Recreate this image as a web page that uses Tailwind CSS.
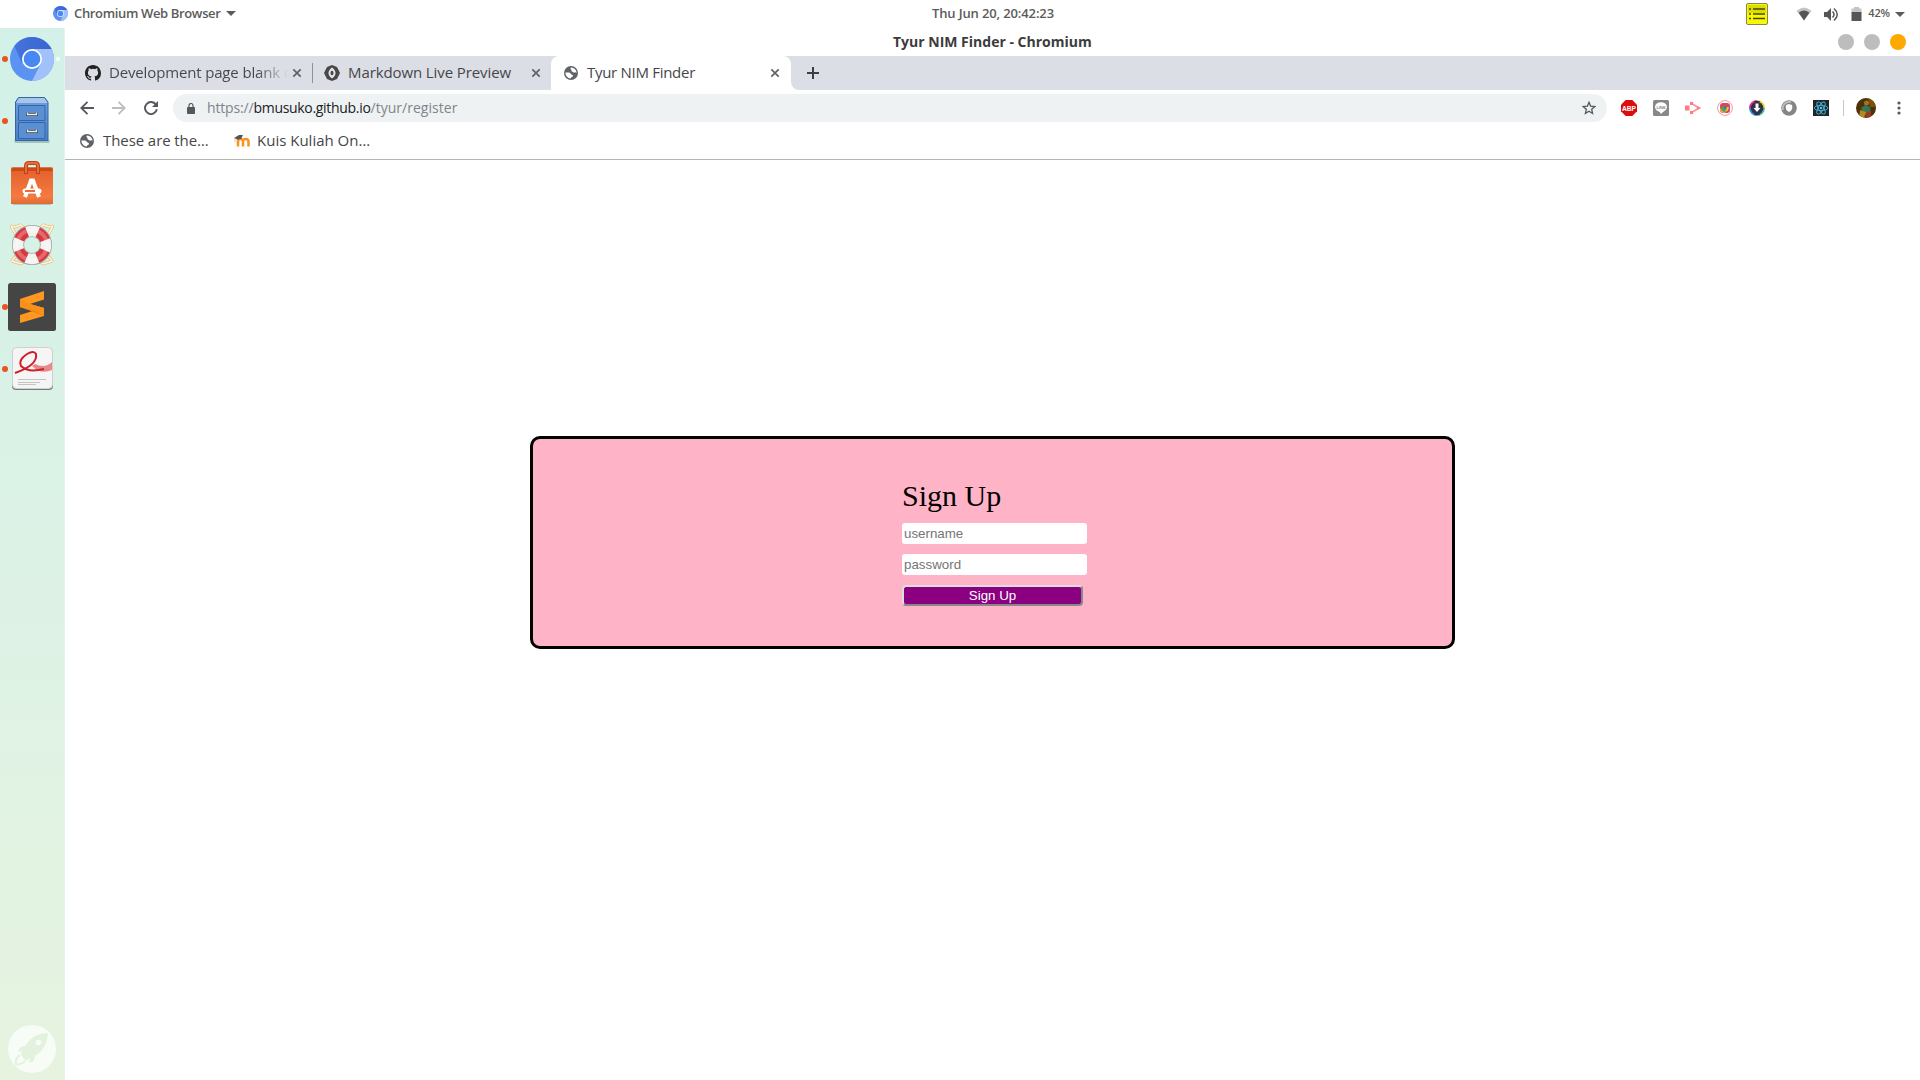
<!DOCTYPE html>
<html lang="en">
<head>
<meta charset="utf-8">
<title>Tyur NIM Finder - Chromium</title>
<script src="https://cdn.jsdelivr.net/npm/@tailwindcss/browser@4"></script>
</head>
<body class="flex h-screen w-screen flex-col overflow-hidden bg-white font-['Open_Sans',sans-serif] text-[#45464a]">
<svg class="absolute size-0">
  <defs>
    <linearGradient id="blade" x1="0" y1="0" x2="1" y2="0"><stop offset="0" stop-color="#4574dd"/><stop offset="1" stop-color="#3764cf"/></linearGradient>
    <linearGradient id="cab" x1="0" y1="0" x2="0" y2="1"><stop offset="0" stop-color="#6ea0e0"/><stop offset="1" stop-color="#4c80c6"/></linearGradient>
    <linearGradient id="bag" x1="0" y1="0" x2="0" y2="1"><stop offset="0" stop-color="#e2602a"/><stop offset=".8" stop-color="#f47a40"/><stop offset="1" stop-color="#e06a34"/></linearGradient>
    <symbol id="chromium" viewBox="0 0 44 44">
      <circle cx="22" cy="22" r="22" fill="#5b93f3"/>
      <path d="M22 12H41.6A22 22 0 0 1 22 44L31 26Z" fill="#a1c1fa"/>
      <path d="M4.3 9A22 22 0 0 1 41.6 12H22L12 26Z" fill="url(#blade)"/>
      <circle cx="22" cy="22" r="10" fill="#fff"/><circle cx="22" cy="22" r="8.3" fill="#4688f4"/>
    </symbol>
    <symbol id="globe" viewBox="0 0 14 14">
      <circle cx="7" cy="7" r="7" fill="#5f6368"/>
      <path d="M7.2 1.4c-1 .5-.8 1.600-.2 2 .9.5.2 1.600 1 2.100 1 .5 1.600 1.200 2.900.9 1-.2 1.300.6 1.700.3C12.400 3.700 10 1.500 7.200 1.400ZM1.400 6.500c0 3 2.300 5.700 5.400 6.100.1-1 .3-1.400 1.400-1.700 1-.3.9-1.800.1-2.100-1-.3-1.500-.3-1.700-1.200-.3-1-1.400-1.100-2.700-1.100Z" fill="#fff"/>
    </symbol>
    <symbol id="close" viewBox="0 0 10 10"><path d="M1.300 1.300L8.700 8.700M8.700 1.300L1.300 8.700" stroke="#5f6368" stroke-width="1.700"/></symbol>
  </defs>
</svg>

<!-- Desktop panel -->
<header class="grid h-7 shrink-0 grid-cols-3 items-center text-[13px] font-semibold leading-[18px] text-[#5b5b5b]">
  <div class="flex items-center pb-[2px] pl-[53px]">
    <svg class="size-[15px]"><use href="#chromium"/></svg>
    <span class="ml-[6px] tracking-[-0.35px] whitespace-nowrap">Chromium Web Browser</span>
    <svg class="ml-[5px] h-[5px] w-[10px]" viewBox="0 0 10 5"><path d="M0 0H10L5 5Z" fill="#5b5b5b"/></svg>
  </div>
  <div class="pb-[2px] pl-[65px]"><div class="w-[246px] pl-[227px] whitespace-nowrap tracking-[-0.13px]">Thu Jun 20, 20:42:23</div></div>
  <div class="flex items-center justify-end pr-[15px]">
    <svg class="mr-[28px] size-[22px]" viewBox="0 0 22 22"><rect x=".5" y=".5" width="21" height="21" rx="1.500" fill="#f8f800" stroke="#86865a"/><path d="M2 2H20V10H2Z" fill="#dcdc00"/><path d="M3 6h2M3 11h2M3 15.500h2M7 6h12M7 11h12M7 15.500h12" stroke="#45450c" stroke-width="1.500"/></svg>
    <svg class="h-[14px] w-[16px]" viewBox="0 0 16 14"><path d="M.5 4Q8-3 15.500 4L8 13.500Z" fill="#c4c4c4"/><path d="M2.700 5.800Q8 1.200 13.300 5.800L8 13.500Z" fill="#555"/></svg>
    <svg class="ml-[11px] h-[15px] w-[16px]" viewBox="0 0 16 15"><path d="M1 5H4L8 1V14L4 10H1Z" fill="#555"/><path d="M9.500 4.500Q12.500 7.500 9.500 10.500M11 1.500Q17.500 7.500 11 13.500" fill="none" stroke="#555" stroke-width="1.500"/></svg>
    <svg class="ml-[12px] h-[14px] w-[11px]" viewBox="0 0 11 14"><path d="M.5 1.500H3V0H8V1.500H10.500V6H.5Z" fill="#c4c4c4"/><path d="M.5 5H10.500V14H.5Z" fill="#555"/></svg>
    <span class="mr-[5px] ml-[6px] pb-[2px] text-[11px] tracking-[-0.1px]">42%</span>
    <svg class="h-[5px] w-[10px]" viewBox="0 0 10 5"><path d="M0 0H10L5 5Z" fill="#5b5b5b"/></svg>
  </div>
</header>

<div class="flex min-h-0 flex-1">
  <!-- Dock -->
  <aside class="flex w-[65px] shrink-0 flex-col gap-[14px] border-r border-[#e3f5ea] bg-linear-to-b from-[#d3f1e8] via-[#ddf2e5] via-55% to-[#e6f3df] pt-[7px] pb-[7px] pl-[2px]">
    <div class="flex h-12 items-center"><span class="size-[5.500px] rounded-full bg-[#e95420]"></span><svg class="mr-[2px] ml-[2.500px] size-[44px]"><use href="#chromium"/></svg><span class="size-[4px] rounded-full bg-white"></span></div>
    <div class="flex h-12 items-center"><span class="mr-[.5px] size-[5.500px] rounded-full bg-[#e95420]"></span>
      <svg class="size-12" viewBox="0 0 48 48"><path d="M6 43H42L41 46H7Z" fill="#a5bfba"/><path d="M10.500 .5H36.500L40 5V43.500H7.500V5Z" fill="url(#cab)" stroke="#3465a4"/><path d="M11 1H36L39.500 6H8Z" fill="#a9c6e8"/><g fill="#5b8fd3" stroke="#3465a4"><path d="M10.500 8.500H37V23.500H10.500ZM10.500 25.500H37V41.500H10.500Z"/></g><path d="M19.500 15.500V17.500H28.500V15.500M19.500 32.500V34.500H28.500V32.500" fill="none" stroke="#444" stroke-width="3"/><path d="M19.500 15.500V17.500H28.500V15.500M19.500 32.500V34.500H28.500V32.500" fill="none" stroke="#eee" stroke-width="1.400"/></svg>
    </div>
    <svg class="ml-[6px] size-12 shrink-0" viewBox="0 0 48 48"><path d="M5 45H43V46H5Z" fill="#a9c7bd"/><path d="M3 8.500H45V45H3Z" fill="url(#bag)"/><path d="M5 8.500H43L45 12H3Z" fill="#cc4a16"/><path d="M18 15V7Q18 4 21 4H27Q30 4 30 7V15" fill="none" stroke="#b9441a" stroke-width="4"/><path d="M18 14V7Q18 4 21 4H27Q30 4 30 7V14" fill="none" stroke="#ee6b38" stroke-width="2"/><path d="M17 38L23 21.500H25L31 38" fill="none" stroke="#fff" stroke-width="4"/><rect x="14.500" y="29.500" width="19" height="5" rx="2.500" fill="#fff"/><path d="M17 32H27" stroke="#ec6b37" stroke-width="2"/></svg>
    <svg class="ml-[6px] size-12 shrink-0" viewBox="0 0 48 48"><g fill="none" stroke="#dfc38b" stroke-width="3" stroke-linejoin="round"><path d="M10 17L4 7Q2 4 7 6L13 4L18 11M38 17L44 7Q46 4 41 6L35 4L30 11M10 32L4 40L13 43L18 38M38 32L44 40L35 43L30 38"/></g><g fill="none" stroke="#fff4d8" stroke-width="1.500"><path d="M10 17L4 7Q2 4 7 6L13 4L18 11M38 17L44 7Q46 4 41 6L35 4L30 11M10 32L4 40L13 43L18 38M38 32L44 40L35 43L30 38"/></g><circle cx="24" cy="24" r="14" fill="none" stroke="#98a6a0" stroke-width="12"/><circle cx="24" cy="24" r="14" fill="none" stroke="#f4f3f1" stroke-width="10.500"/><circle cx="24" cy="24" r="14" fill="none" stroke="#d8383d" stroke-width="10.500" stroke-dasharray="11 10.990" stroke-dashoffset="-5.500"/><circle cx="24" cy="24" r="15" fill="none" stroke="#fff" stroke-opacity=".25" stroke-width="4"/></svg>
    <div class="flex h-12 items-center"><span class="mr-[.5px] size-[5.500px] rounded-full bg-[#e95420]"></span>
      <svg class="size-12" viewBox="0 0 48 48"><rect width="48" height="48" rx="2.500" fill="#454545"/><path d="M12 16L36 8V16.500L22 21L36 25V33L12 40V32L26 27.500L12 24Z" fill="#ff9820"/><path d="M22 21L36 25V33L12 24Z" fill="#ec8412"/><path d="M12 16V24L26 27.500L36 33V25L22 21Z" fill="#f99019"/></svg>
    </div>
    <div class="flex h-12 items-center"><span class="mr-[.5px] size-[5.500px] rounded-full bg-[#e95420]"></span>
      <svg class="size-12" viewBox="0 0 48 48"><rect x="4" y="4" width="41" height="41" rx="4" fill="#777d7a"/><rect x="4.500" y="2.500" width="40" height="41" rx="4" fill="#f5f5f5" stroke="#d0d0d0"/><path d="M27 19Q37 24 44 17V25Q33 30 24 21Z" fill="#e8888b"/><path d="M7 28Q30 20 28 9Q26 5 19 9Q10 15 13 21Q20 28 36 24" fill="none" stroke="#cf1f27" stroke-width="2"/><path d="M10 34.500H38M10 37.500H32M10 39.500H28" stroke="#c4c4c4"/></svg>
    </div>
    <svg class="mt-auto ml-[6px] size-12 shrink-0" viewBox="0 0 48 48"><circle cx="24" cy="24" r="24" fill="#f7fcf6"/><path d="M40 8Q27 8 20 17L17 21Q11 21 10 27L14 26L13 30L18 36L22 33L21 37H25Q27 34 27 31Q39 24 40 8Z" fill="#e3f2df"/><circle cx="30.500" cy="17.500" r="2.800" fill="#f7fcf6"/><path d="M12 30Q7 33 8 39.500Q15 39 17 36" fill="none" stroke="#e3f2df" stroke-width="2"/></svg>
  </aside>

  <!-- Browser window -->
  <div class="flex min-w-0 flex-1 flex-col">
    <div class="flex h-7 shrink-0 items-center justify-end gap-[10px] pr-[14px]">
      <span class="mr-auto -mt-px pl-[828px] text-[14px] font-bold text-[#3c3c3c]">Tyur NIM Finder - Chromium</span>
      <span class="size-4 rounded-full bg-[#bdbdbd]"></span><span class="size-4 rounded-full bg-[#bdbdbd]"></span><span class="size-4 rounded-full bg-[#ffa900]"></span>
    </div>

    <div class="flex h-[34px] shrink-0 bg-[#dcdee6] text-[15px]">
      <div class="flex w-[248px] items-center pl-[20px]">
        <svg class="size-4" viewBox="0 0 16 16"><path fill="#222" d="M8 0C3.580 0 0 3.580 0 8c0 3.540 2.290 6.530 5.470 7.590.4.070.550-.170.550-.380 0-.190-.010-.820-.010-1.490-2.010.370-2.530-.490-2.690-.940-.090-.230-.480-.940-.820-1.130-.280-.150-.680-.520-.010-.530.630-.010 1.080.580 1.230.820.720 1.210 1.870.870 2.330.660.070-.520.280-.870.510-1.070-1.780-.200-3.640-.890-3.640-3.950 0-.870.310-1.590.820-2.150-.080-.200-.360-1.020.080-2.120 0 0 .670-.210 2.200.820a7.600 7.600 0 0 1 4 0c1.530-1.040 2.200-.820 2.200-.820.440 1.100.160 1.920.080 2.120.510.560.820 1.270.820 2.150 0 3.070-1.870 3.750-3.650 3.950.290.250.540.730.540 1.480 0 1.070-.010 1.930-.010 2.200 0 .210.150.460.550.380A8.010 8.010 0 0 0 16 8c0-4.420-3.580-8-8-8z"/></svg>
        <span class="ml-[8px] w-[183px] bg-linear-to-r from-[#45464a] from-81% to-transparent to-98% bg-clip-text pb-[2px] whitespace-nowrap tracking-[-0.15px] text-transparent">Development page blank c</span>
        <svg class="size-[10px]"><use href="#close"/></svg>
      </div>
      <div class="flex w-[239px] items-center">
        <span class="-ml-px h-5 w-px bg-[#8f9196]"></span>
        <svg class="ml-[11px] size-4" viewBox="0 0 16 16"><path d="M8 0L10.500 1L13 2L14.500 5L16 8L14.500 11L13 14L10.500 15L8 16L5.500 15L3 14L1.500 11L0 8L1.500 5L3 2L5.500 1Z" fill="#484848"/><path d="M8 2.500Q11.500 5 11.500 8T8 13.500Q4.500 11 4.500 8T8 2.500Z" fill="#e4e5ea"/><ellipse cx="8" cy="8" rx="1.500" ry="2.200" fill="#484848"/></svg>
        <span class="ml-[8px] w-[183px] pb-[2px] whitespace-nowrap tracking-[-0.1px]">Markdown Live Preview</span>
        <svg class="size-[10px]"><use href="#close"/></svg>
      </div>
      <div class="bg-white"><div class="-ml-[10px] h-full w-[10px] rounded-br-lg bg-[#dcdee6]"></div></div>
      <div class="-ml-[1px] flex w-[240px] items-center rounded-t-lg bg-white pl-[13px]">
        <svg class="size-[14px]"><use href="#globe"/></svg>
        <span class="ml-[9px] w-[183px] pb-[2px] whitespace-nowrap tracking-[-0.29px]">Tyur NIM Finder</span>
        <svg class="size-[10px]"><use href="#close"/></svg>
      </div>
      <div class="flex flex-1 bg-white"><div class="flex flex-1 items-center rounded-bl-lg bg-[#dcdee6] pl-[16px]"><svg class="size-3" viewBox="0 0 12 12"><path d="M6 0V12M0 6H12" stroke="#3c4043" stroke-width="2"/></svg></div></div>
    </div>

    <div class="flex h-9 shrink-0 items-center pl-[15px]">
      <svg class="size-[14px]" viewBox="0 0 14 14"><path d="M14 7H1.500M7.500 .8L1.300 7L7.500 13.200" fill="none" stroke="#55585d" stroke-width="1.800"/></svg>
      <svg class="ml-[18px] size-[14px]" viewBox="0 0 14 14"><path d="M0 7H12.500M6.500 .8L12.700 7L6.500 13.200" fill="none" stroke="#bcbdc0" stroke-width="1.800"/></svg>
      <svg class="ml-[18px] size-[14px]" viewBox="0 0 14 14"><path d="M12 3.700A6 6 0 1 0 12.900 8.300" fill="none" stroke="#55585d" stroke-width="1.900"/><path d="M14 0V6H8Z" fill="#55585d"/></svg>
      <div class="ml-[15px] flex h-7 w-[1434px] items-center rounded-full bg-[#eef2f3] pr-[11px] pl-[14px] text-[14px] text-[#80858a]">
        <svg class="h-[11px] w-[8px]" viewBox="0 0 8 11"><path d="M2 4V2.500a2 2 0 0 1 4 0V4" fill="none" stroke="#55585d" stroke-width="1.200"/><rect y="4" width="8" height="7" rx=".8" fill="#55585d"/></svg>
        <div class="ml-[12px] flex pb-[2px] whitespace-nowrap"><span class="tracking-[-0.16px]">https://</span><span class="tracking-[-0.31px] text-[#202124]">bmusuko.github.io</span><span class="tracking-[0.02px]">/tyur/register</span></div>
        <svg class="ml-auto size-[14px]" viewBox="0 0 14 14"><path d="M7 1.300L8.600 5.100L12.900 5.500L9.700 8.300L10.600 12.500L7 10.300L3.400 12.500L4.300 8.300L1.100 5.500L5.400 5.100Z" fill="none" stroke="#55585d" stroke-width="1.300"/></svg>
      </div>
      <div class="ml-[14px] flex items-center gap-4">
        <svg class="size-4" viewBox="0 0 16 16"><path d="M4.700 0H11.300L16 4.700V11.300L11.300 16H4.700L0 11.300V4.700Z" fill="#db0d0d"/><text x="8" y="10.900" text-anchor="middle" font-family="Liberation Sans" font-size="8" font-weight="700" textLength="14" lengthAdjust="spacingAndGlyphs" fill="#fff">ABP</text></svg>
        <svg class="size-4" viewBox="0 0 16 16"><rect width="16" height="16" rx="1.500" fill="#888"/><ellipse cx="8" cy="7" rx="6" ry="4.800" fill="#fff"/><path d="M6 11L8 14L12 10Z" fill="#fff"/><text x="8" y="8.500" text-anchor="middle" font-family="Liberation Sans" font-size="4" font-weight="700" fill="#888">LINE</text></svg>
        <svg class="size-4" viewBox="0 0 16 16"><path d="M0 5.500H4.500V10.500H0Z" fill="#ff7b80"/><path d="M6 5V3L14 8L6 13V11" fill="none" stroke="#ff9195" stroke-width="1.800"/><path d="M5 2H8V5H5ZM5 11H8V14H5ZM12 6L16 8L12 10Z" fill="#ff7b80"/></svg>
        <svg class="size-4" viewBox="0 0 16 16"><circle cx="8" cy="8" r="7.400" fill="#fff" stroke="#ef96a8"/><rect x="3" y="3" width="10" height="10" rx="3" fill="#e23a80"/><path d="M3 8L9 13H6Q3 13 3 10Z" fill="#f7a42c"/><circle cx="8" cy="8" r="3.800" fill="#45a853"/><path d="M4.500 6.500A3.800 3.800 0 0 1 11.700 7H8Z" fill="#e84334"/><path d="M11.800 7Q12 11 8 11.800L10 7Z" fill="#fbc116"/><circle cx="8" cy="8" r="1.500" fill="#3f75d8"/></svg>
        <svg class="size-4" viewBox="0 0 16 16"><g fill="none" stroke-width="3"><path d="M8 1.500A6.500 6.500 0 0 1 14.500 8" stroke="#e9da27"/><path d="M14.500 8A6.500 6.500 0 0 1 8 14.500" stroke="#47bc9c"/><path d="M8 14.500A6.500 6.500 0 0 1 1.500 8" stroke="#368de0"/><path d="M1.500 8A6.500 6.500 0 0 1 8 1.500" stroke="#ea3190"/></g><path d="M5 1H11L8 5ZM5 15H11L8 11Z" fill="#30304a"/><circle cx="8" cy="8" r="6.300" fill="#30304a"/><path d="M6.500 3.500H9.500V8H11.500L8 12L4.500 8H6.500Z" fill="#fff"/></svg>
        <svg class="size-4" viewBox="0 0 16 16"><circle cx="8" cy="8" r="7.800" fill="#858585"/><path d="M2 10A6.500 6.500 0 0 1 10 2" fill="none" stroke="#bcbcbc" stroke-width="2"/><path d="M5 5L8 4L11 5Q12.500 10 8 12Q3.500 10 5 5Z" fill="#fff"/></svg>
        <svg class="size-4" viewBox="0 0 16 16"><rect width="16" height="16" fill="#222428"/><g fill="none" stroke="#45b4da" stroke-width=".9"><ellipse cx="8" cy="8" rx="6.800" ry="2.600"/><ellipse cx="8" cy="8" rx="6.800" ry="2.600" transform="rotate(60 8 8)"/><ellipse cx="8" cy="8" rx="6.800" ry="2.600" transform="rotate(120 8 8)"/></g><circle cx="8" cy="8" r="1.300" fill="#51c5eb"/></svg>
      </div>
      <span class="ml-[14px] h-4 w-px bg-[#c4c6c9]"></span>
      <svg class="ml-[12px] size-5" viewBox="0 0 20 20"><defs><clipPath id="face"><circle cx="10" cy="10" r="10"/></clipPath></defs><g clip-path="url(#face)"><path d="M0 0H20V20H0Z" fill="#4b3208"/><path d="M12 0H20V9H14Z" fill="#79530c"/><path d="M5 10L9 7L14 9L15 16L8 17Z" fill="#397552"/><circle cx="10.500" cy="5" r="2.500" fill="#a0722b"/><path d="M4 12L10 14L8 20H3Z" fill="#b38a22"/><path d="M10 15L15 13V20H9Z" fill="#a33520"/></g></svg>
      <svg class="ml-[20.500px] h-[14px] w-[4px]" viewBox="0 0 4 14"><g fill="#55585d"><circle cx="2" cy="2" r="1.600"/><circle cx="2" cy="7" r="1.600"/><circle cx="2" cy="12" r="1.600"/></g></svg>
    </div>

    <div class="flex h-[34px] shrink-0 items-center border-b border-[#b4b4b4] pb-[4px] pl-[15px] text-[15px] whitespace-nowrap">
      <svg class="size-[14px]"><use href="#globe"/></svg>
      <span class="ml-[9px] w-[131px] tracking-[-0.08px]">These are the…</span>
      <svg class="h-[12px] w-[16px]" viewBox="0 0 16 12"><path d="M4 11.500V6.500Q4 4 6.500 4T9 6.500V11.500M9 6.500Q9 4 11.700 4T14.500 6.500V11.500" fill="none" stroke="#f7931e" stroke-width="2.500"/><path d="M0 3L5 0H9L7 4L3 4.500Z" fill="#555"/><path d="M1 3V7" stroke="#e6b88d" stroke-width=".8"/></svg>
      <span class="ml-[7px]">Kuis Kuliah On…</span>
    </div>

    <!-- Page content -->
    <main class="flex flex-1 flex-col items-center pt-[276px] pr-[1px]">
      <form class="flex h-[213px] w-[925px] flex-col rounded-[10px] border-3 border-black bg-[#ffb3c6] pt-[39px] pl-[369px] font-['Liberation_Sans',sans-serif] text-[13.333px]">
        <h1 class="h-[45px] pl-[.5px] font-['Liberation_Serif',serif] text-[30px] leading-[36px] text-black">Sign Up</h1>
        <input class="mb-[10px] h-[21px] w-[185px] rounded-[3px] bg-white pr-[2px] pl-[2.500px] placeholder:text-[#757575]" type="text" placeholder="username">
        <input class="mb-[10px] h-[21px] w-[185px] rounded-[3px] bg-white pr-[2px] pl-[2.500px] placeholder:text-[#757575]" type="password" placeholder="password">
        <button class="h-[21px] w-[181px] rounded-[4px] border-2 border-t-[#ddd] border-r-[#888] border-b-[#888] border-l-[#ddd] bg-[#8b0080] pl-px text-center leading-[17px] text-white" type="button">Sign Up</button>
      </form>
    </main>
  </div>
</div>
</body>
</html>
